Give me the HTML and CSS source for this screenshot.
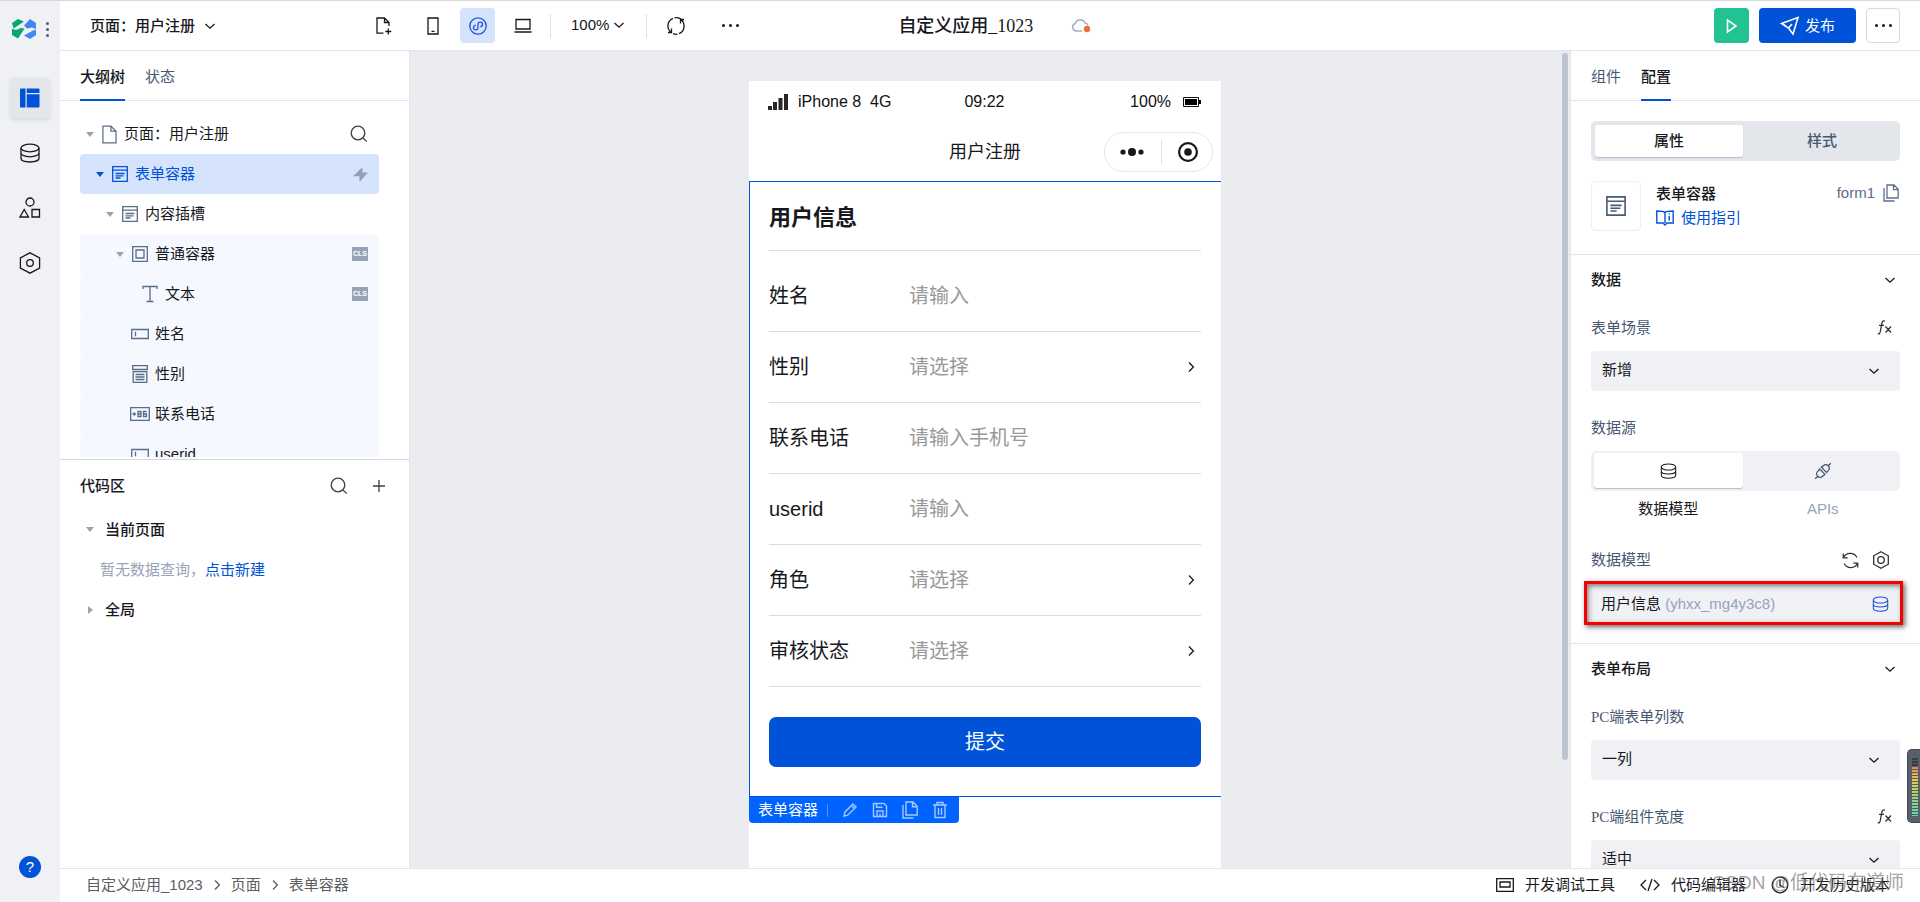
FILE: index.html
```html
<!DOCTYPE html>
<html lang="zh-CN">
<head>
<meta charset="utf-8">
<title>自定义应用_1023</title>
<link rel="stylesheet" href="styles.css">
</head>
<body>
<svg class="sprite" aria-hidden="true">
  <symbol id="chev-down" viewBox="0 0 12 12"><path d="M1.5 4 6 8.2 10.5 4"/></symbol>
  <symbol id="chev-right" viewBox="0 0 12 12"><path d="M4 1.5 8.4 6 4 10.5"/></symbol>
  <symbol id="search" viewBox="0 0 18 18"><circle cx="8" cy="8" r="6.8"/><path d="m13 13 3.8 3.6"/></symbol>
  <symbol id="db" viewBox="0 0 20 20"><ellipse cx="10" cy="5" rx="9" ry="3.8"/><path d="M1 5v10.300C1 17.500 5 19 10 19s9-1.500 9-3.700V5M1 10c0 2.200 4 3.800 9 3.800s9-1.600 9-3.800"/></symbol>
  <symbol id="hex" viewBox="0 0 22 22"><path d="M11 .8 20.6 5.8v10.4L11 21.2 1.4 16.2V5.8z"/><circle cx="11" cy="11" r="3.3"/></symbol>
  <symbol id="hex-ring" viewBox="0 0 18 18"><path d="M9 .8 16.3 4.8v8.4L9 17.2 1.700 13.200V4.800z"/><circle cx="9" cy="9" r="3.300"/></symbol>
  <symbol id="form" viewBox="0 0 16 16"><path d="M.7.7h14.600v14.600H.7zM.7 4.200h14.600M3.500 7.500h9M3.500 9.800h8M3.500 12h5"/></symbol>
  <symbol id="box" viewBox="0 0 16 16"><path d="M.7.7h14.600v14.600H.7zM4 4h8v8H4z"/></symbol>
  <symbol id="text" viewBox="0 0 16 18"><path d="M1 4V1.500h14V4M8 1.500v15M4.500 16.500h7"/></symbol>
  <symbol id="input" viewBox="0 0 18 12"><path d="M.7 1.500h16.600v9H.7zM4.500 3.800v4.500"/></symbol>
  <symbol id="select" viewBox="0 0 16 18"><path d="M.7.7h14.600v3.600H.7zM1.200 6.500h13.600v10.800H1.200zM3.500 9.500h9M3.500 12h9M3.500 14.500h9"/></symbol>
  <symbol id="phone-code" viewBox="0 0 20 14"><path d="M.7.7h18.600v12.600H.7zM2.500 7h3.600M4.300 5.200v3.600M8 4.500h3v5H8zM8 7h3M16.500 4.500h-3v5h3V7h-3"/></symbol>
  <symbol id="page" viewBox="0 0 16 20"><path d="M1 1h8.500L15 6.500V19H1zM9.500 1v5.500H15"/></symbol>
  <symbol id="copy" viewBox="0 0 16 18"><path d="M4 1h7l4.200 4.200V14H4zM10.500 1v4.700h4.700M1 4v13h10.500"/></symbol>
  <symbol id="refresh" viewBox="0 0 18 18"><path d="M1.500 6A8 8 0 0 1 15.800 5.800M16.500 12A8 8 0 0 1 2.200 12.200M1.300 1.500V6.300H6M16.700 16.500v-4.800H12"/></symbol>
  <symbol id="fx" viewBox="0 0 16 18"><path d="M8 2.200C5.800 1 5 3 4.600 5.500L3.300 12.500C2.900 14.800 2 15.300.8 14.700M2 6.300h5M8.500 7.500l5.500 6M14 7.500l-5.500 6"/></symbol>
</svg>

<div class="app">
  <aside class="rail">
    <div class="brand">
      <svg class="logo" viewBox="0 0 24 20" aria-label="logo"><path fill="#07a86c" d="M0 4 6 0l6 2.500L1.500 9.500zM0 9.800 4 11l5-2 3.500.5L6 19.500 0 16z"/><path fill="#4285f4" d="m18 0 6 4v6l-4-1.500-5 1-3-3zM23 10.500l1 1V16l-6 4-6-3.500z"/></svg>
      <button class="dots-v" aria-label="菜单"><i></i><i></i><i></i></button>
    </div>
    <nav class="rail-nav">
      <button class="rail-btn on" aria-label="页面设计"><svg width="20" height="20" viewBox="0 0 20 20"><path fill="#0052d9" d="M1 .5h4.500v19H1a1 1 0 0 1-1-1v-17a1 1 0 0 1 1-1zM6.700.5H18.500a1 1 0 0 1 1 1V5H6.700zM6.700 6.300h12.800v12.200a1 1 0 0 1-1 1H6.700z"/></svg></button>
      <button class="rail-btn" aria-label="数据"><svg class="ic" width="20" height="20"><use href="#db"/></svg></button>
      <button class="rail-btn" aria-label="组件"><svg class="ic" width="22" height="22" viewBox="0 0 22 22"><circle cx="11" cy="5" r="4"/><path d="M5.200 12.500 9.500 20H1zM13 12.500h7.500V20H13z"/></svg></button>
      <button class="rail-btn" aria-label="设置"><svg class="ic" width="22" height="22"><use href="#hex"/></svg></button>
    </nav>
    <button class="help" aria-label="帮助">?</button>
  </aside>

  <div class="main">
    <header class="topbar">
      <div class="top-left">
        <button class="page-name">页面：用户注册 <svg class="ic chev"><use href="#chev-down"/></svg></button>
      </div>
      <div class="tools">
        <button class="tool" aria-label="新建页面"><svg class="ic" width="16" height="18" viewBox="0 0 16 18"><path d="M7.500 16.200H1V1h7.500L13 5.500V9M8.500 1v4.500H13M12.300 11.500v6M9.300 14.500h6"/></svg></button>
        <button class="tool" aria-label="手机"><svg class="ic" width="12" height="18" viewBox="0 0 12 18"><path d="M1 1h10v16H1zM4.500 14.300h3"/></svg></button>
        <button class="tool on" aria-label="小程序"><svg class="ic" width="18" height="18" viewBox="0 0 18 18"><circle cx="9" cy="9" r="8.200"/><path d="M6.800 8.300A2.300 2.300 0 1 0 9 11.300V6.700a2.300 2.300 0 1 1 2.200 3"/></svg></button>
        <button class="tool" aria-label="电脑"><svg class="ic" width="18" height="16" viewBox="0 0 18 16"><path d="M2 1.500h14v9.500H2zM.5 14h17"/></svg></button>
        <span class="sep"></span>
        <button class="zoom">100% <svg class="ic chev"><use href="#chev-down"/></svg></button>
        <span class="sep"></span>
        <button class="tool" aria-label="刷新"><svg class="ic" width="20" height="20" viewBox="0 0 20 20"><path d="M7 2.300A8.200 8.200 0 0 0 5.300 16.500M5.500 12.500v4H2M8.500 1.800A8.200 8.200 0 0 1 17 5.500M13 17.700A8.200 8.200 0 0 0 14.700 3.500M14.500 7.500v-4H18M11.500 18.200A8.200 8.200 0 0 1 7 17.600"/></svg></button>
        <button class="tool more" aria-label="更多"><i></i><i></i><i></i></button>
      </div>
      <div class="app-title"><h1>自定义应用_1023</h1>
        <svg class="cloud" width="20" height="16" viewBox="0 0 20 16"><path d="M11 13H5a4 4 0 0 1-.5-7.800A5 5 0 0 1 14 5a3.500 3.500 0 0 1 3 2.500"/><circle cx="16" cy="11" r="3.200"/></svg>
      </div>
      <div class="top-actions">
        <button class="play" aria-label="预览"><svg width="12" height="16" viewBox="0 0 12 16"><path d="M1.500 2v12L10 8z"/></svg></button>
        <button class="publish"><svg width="20" height="20" viewBox="0 0 20 20"><path d="M1.500 7.500 18 1.500 13 18 8.500 12zM8.500 12l3.500-4M1.500 7.500 6 10"/></svg>发布</button>
        <button class="more outlined" aria-label="更多操作"><i></i><i></i><i></i></button>
      </div>
    </header>

    <div class="workspace">
      <section class="left">
        <div class="outline">
          <div class="tabs"><button class="tab on">大纲树</button><button class="tab">状态</button></div>
          <ul class="tree">
            <li class="node d0"><span class="caret"></span><svg class="ic" width="15" height="19"><use href="#page"/></svg><span class="name">页面：用户注册</span><button class="plain" aria-label="搜索"><svg class="ic dark" width="18" height="18"><use href="#search"/></svg></button></li>
            <li class="node d1 on"><span class="caret"></span><svg class="ic" width="16" height="16"><use href="#form"/></svg><span class="name">表单容器</span><svg class="bolt" width="15" height="15" viewBox="0 0 15 15"><path d="M9.500 0v5.500H15L6.500 15V9.300H0z"/></svg></li>
            <li class="node d2"><span class="caret"></span><svg class="ic" width="16" height="16"><use href="#form"/></svg><span class="name">内容插槽</span></li>
            <li class="node d3 sub"><span class="caret"></span><svg class="ic" width="16" height="16"><use href="#box"/></svg><span class="name">普通容器</span><span class="cls">CLS</span></li>
            <li class="node d4 sub"><svg class="ic" width="16" height="18"><use href="#text"/></svg><span class="name">文本</span><span class="cls">CLS</span></li>
            <li class="node d3 sub leaf"><svg class="ic" width="18" height="12"><use href="#input"/></svg><span class="name">姓名</span></li>
            <li class="node d3 sub leaf"><svg class="ic" width="18" height="18"><use href="#select"/></svg><span class="name">性别</span></li>
            <li class="node d3 sub leaf wide"><svg class="ic" width="20" height="14"><use href="#phone-code"/></svg><span class="name">联系电话</span></li>
            <li class="node d3 sub leaf"><svg class="ic" width="18" height="12"><use href="#input"/></svg><span class="name">userid</span></li>
          </ul>
        </div>
        <div class="code">
          <div class="code-head"><h2>代码区</h2>
            <button class="plain" aria-label="搜索代码"><svg class="ic dark" width="18" height="18"><use href="#search"/></svg></button>
            <button class="plain" aria-label="新建"><svg class="ic dark" width="12" height="12" viewBox="0 0 12 12"><path d="M6 0v12M0 6h12"/></svg></button>
          </div>
          <div class="group"><span class="caret"></span>当前页面</div>
          <p class="empty">暂无数据查询，<a href="#new">点击新建</a></p>
          <div class="group closed"><span class="caret"></span>全局</div>
        </div>
      </section>

      <main class="canvas">
        <div class="phone">
          <div class="status">
            <span class="carrier"><svg width="20" height="16" viewBox="0 0 20 16"><path fill="#262626" d="M0 12h4v4H0zM5 8h4v8H5zM10.500 4h4v12h-4zM16 0h4v16h-4z"/></svg>iPhone 8 &nbsp;4G</span>
            <span class="clock">09:22</span>
            <span class="battery">100%<svg width="18" height="10" viewBox="0 0 18 10"><path fill="none" stroke="#111" d="M.5.5h15v9H.5z"/><path d="M2 2h12v6H2zM16 3h2v4h-2z"/></svg></span>
          </div>
          <div class="navbar">用户注册
            <div class="capsule">
              <svg width="24" height="10" viewBox="0 0 24 10"><circle cx="3" cy="5" r="2.600"/><circle cx="12" cy="5" r="4"/><circle cx="21" cy="5" r="2.600"/></svg>
              <span class="bar"></span>
              <svg width="20" height="20" viewBox="0 0 20 20"><circle cx="10" cy="10" r="8.900" fill="none" stroke="#181818" stroke-width="2.200"/><circle cx="10" cy="10" r="3.800"/></svg>
            </div>
          </div>
          <form class="form">
            <h2 class="form-title">用户信息</h2>
            <div class="field first"><label for="name">姓名</label><input id="name" type="text" placeholder="请输入"></div>
            <div class="field"><label for="sex">性别</label><select id="sex"><option>请选择</option></select><svg class="ic chev"><use href="#chev-right"/></svg></div>
            <div class="field"><label for="tel">联系电话</label><input id="tel" type="tel" placeholder="请输入手机号"></div>
            <div class="field"><label for="uid">userid</label><input id="uid" type="text" placeholder="请输入"></div>
            <div class="field"><label for="role">角色</label><select id="role"><option>请选择</option></select><svg class="ic chev"><use href="#chev-right"/></svg></div>
            <div class="field"><label for="state">审核状态</label><select id="state"><option>请选择</option></select><svg class="ic chev"><use href="#chev-right"/></svg></div>
            <button class="submit" type="button">提交</button>
          </form>
          <div class="sel-bar"><span>表单容器</span><span class="bar"></span>
            <button class="plain" aria-label="编辑"><svg width="16" height="16" viewBox="0 0 16 16"><path d="M2 14l.8-3.800L11 2l3 3-8.300 8.200zM9.500 3.500l3 3"/></svg></button>
            <button class="plain" aria-label="保存"><svg width="16" height="16" viewBox="0 0 16 16"><path d="M1.500 1.500h10.500l2.500 2.500v10.500h-13zM4.500 1.500v3.800h6M5 14.500V9h6v5.500M8 11.500v3"/></svg></button>
            <button class="plain" aria-label="复制"><svg width="16" height="18"><use href="#copy"/></svg></button>
            <button class="plain" aria-label="删除"><svg width="16" height="18" viewBox="0 0 16 18"><path d="M1 4h14M5 4V1.500h6V4M3 4v12.500h10V4M6.500 7v7M9.500 7v7"/></svg></button>
          </div>
        </div>
        <span class="scrollbar"></span>
      </main>

      <aside class="right">
        <div class="tabs"><button class="tab">组件</button><button class="tab on">配置</button></div>
        <div class="block intro">
          <div class="seg"><button class="on">属性</button><button>样式</button></div>
          <div class="card">
            <span class="card-ic"><svg class="ic" width="20" height="20"><use href="#form"/></svg></span>
            <div class="card-text"><strong>表单容器</strong><a href="#guide"><svg width="18" height="16" viewBox="0 0 18 16"><path d="M9 2.500C8 1.200 6 1 .8 1v12H7l2 2 2-2h6.200V1C12 1 10 1.200 9 2.500zV13M13.200 6v4.500M13.200 3.200v1.300"/></svg>使用指引</a></div>
            <div class="card-id">form1<button class="plain" aria-label="复制标识"><svg class="ic" width="16" height="18"><use href="#copy"/></svg></button></div>
          </div>
        </div>
        <div class="block">
          <h3 class="sec">数据<svg class="ic chev"><use href="#chev-down"/></svg></h3>
          <div class="row"><label for="scene">表单场景</label><button class="plain" aria-label="表达式"><svg class="ic" width="16" height="18"><use href="#fx"/></svg></button></div>
          <div class="pick"><select id="scene"><option>新增</option></select><svg class="ic chev"><use href="#chev-down"/></svg></div>
          <div class="row gap"><span>数据源</span></div>
          <div class="seg light"><button class="on" aria-label="数据模型"><svg class="ic" width="17" height="16"><use href="#db"/></svg></button><button aria-label="APIs"><svg class="ic" width="18" height="18" viewBox="0 0 18 18"><g transform="rotate(-45 9 9)"><path d="M-2 9h3.500M16.500 9H20M8 4.500v9M8 5.500H5a3.500 3.500 0 0 0 0 7h3M10.500 4.500v9M10.500 5.500H13a3.500 3.500 0 0 1 0 7h-2.500"/></g></svg></button></div>
          <div class="captions"><span>数据模型</span><span class="muted">APIs</span></div>
          <div class="row"><span>数据模型</span><span class="row-ic"><button class="plain" aria-label="刷新模型"><svg class="ic" width="17" height="17"><use href="#refresh"/></svg></button><button class="plain" aria-label="模型设置"><svg class="ic" width="18" height="18"><use href="#hex-ring"/></svg></button></span></div>
          <div class="model"><span>用户信息 <span class="muted">(yhxx_mg4y3c8)</span></span><svg class="ic" width="17" height="16"><use href="#db"/></svg></div>
        </div>
        <div class="block last">
          <h3 class="sec">表单布局<svg class="ic chev"><use href="#chev-down"/></svg></h3>
          <div class="row"><label for="cols">PC端表单列数</label></div>
          <div class="pick"><select id="cols"><option>一列</option></select><svg class="ic chev"><use href="#chev-down"/></svg></div>
          <div class="row gap"><label for="width">PC端组件宽度</label><button class="plain" aria-label="表达式"><svg class="ic" width="16" height="18"><use href="#fx"/></svg></button></div>
          <div class="pick"><select id="width"><option>适中</option></select><svg class="ic chev"><use href="#chev-down"/></svg></div>
        </div>
      </aside>
    </div>

    <footer class="foot">
      <nav class="crumbs"><a href="#app">自定义应用_1023</a><svg class="ic chev"><use href="#chev-right"/></svg><a href="#pages">页面</a><svg class="ic chev"><use href="#chev-right"/></svg><a href="#form">表单容器</a></nav>
      <div class="foot-tools">
        <button><svg class="ic" width="18" height="14" viewBox="0 0 18 14"><path d="M.7.7h16.600v12.600H.7zM4 4h10v5H4z"/></svg>开发调试工具</button>
        <button><svg class="ic" width="20" height="14" viewBox="0 0 20 14"><path d="M6 2 1 7l5 5M14 2l5 5-5 5M12 1 8 13"/></svg>代码编辑器</button>
        <button><svg class="ic" width="18" height="18" viewBox="0 0 18 18"><circle cx="9" cy="9" r="7.800"/><path d="M9 4v5.500l4 2"/></svg>开发历史版本</button>
      </div>
    </footer>
  </div>
  <span class="meter"></span>
  <span class="watermark">CSDN @低代码布道师</span>
</div>
</body>
</html>
```
FILE: styles.css
```css
* { box-sizing: border-box; }
body {
  margin: 0;
  font: 15px/20px "Liberation Sans", "Noto Sans CJK SC", sans-serif;
  color: #16181d;
}
button { font: inherit; color: inherit; background: none; border: 0; padding: 0; margin: 0; }
a { color: inherit; text-decoration: none; }
h1, h2, h3, p, ul { margin: 0; padding: 0; font-size: 15px; }
h1, h2, h3, strong { font-weight: 500; }
svg { flex: none; }
.sprite { position: absolute; width: 0; height: 0; }
.ic { fill: none; stroke: currentColor; stroke-width: 1.3; }
.chev { width: 12px; height: 12px; }
.plain { display: flex; align-items: center; justify-content: center; }

.app { display: flex; height: 100vh; position: relative; overflow: hidden; border-top: 1px solid #d9d9dc; }
.main { flex: 1; min-width: 0; display: flex; flex-direction: column; }

.rail { width: 60px; background: #f0f1f5; display: flex; flex-direction: column; align-items: center; padding: 18px 0 24px; }
.brand { display: flex; align-items: center; gap: 10px; height: 20px; }
.logo { width: 24px; height: 20px; }
.dots-v { display: flex; flex-direction: column; gap: 3px; }
.dots-v i { width: 3px; height: 3px; border-radius: 50%; background: #4b5b76; }
.rail-nav { flex: 1; display: flex; flex-direction: column; gap: 15px; padding-top: 39px; }
.rail-btn { width: 40px; height: 40px; border-radius: 4px; display: flex; align-items: center; justify-content: center; }
.rail-btn.on { background: #e3e6eb; box-shadow: 0 2px 4px #0000001a; }
.help { width: 22px; height: 22px; border-radius: 50%; background: #0052d9; color: #fff; line-height: 22px; }

.topbar { height: 50px; flex: none; display: flex; align-items: center; border-bottom: 1px solid #e2e5eb; padding: 0 20px 0 30px; }
.top-left { width: 276px; }
.page-name, .zoom { display: flex; align-items: center; gap: 9px; font-weight: 500; }
.zoom { font-weight: 400; gap: 4px; margin: 0 21px 2px 20px; }
.tools { display: flex; align-items: center; }
.tool { width: 35px; height: 35px; margin-right: 10px; border-radius: 4px; display: flex; align-items: center; justify-content: center; }
.tool:first-child { margin-right: 14px; }
.tool.on { background: #d5e4fc; color: #1f50d8; }
.sep { width: 1px; height: 24px; background: #dcdfe6; }
.tools .sep + .tool { margin: 0 20px 0 11px; }
.more { gap: 4px; display: flex; align-items: center; justify-content: center; }
.more i { width: 3px; height: 3px; border-radius: 50%; background: #16181d; }
.app-title { flex: 1; display: flex; align-items: center; gap: 38px; padding-left: 140px; }
.app-title h1 { font: 500 18px/24px "Liberation Serif", "Noto Sans CJK SC", serif; }
.cloud path { fill: none; stroke: #a3afc4; stroke-width: 1.5; }
.cloud circle { fill: #ed7132; }
.top-actions { display: flex; gap: 10px; }
.play, .publish, .outlined { height: 35px; border-radius: 4px; display: flex; align-items: center; justify-content: center; }
.play { width: 35px; background: #20c391; }
.play path, .publish path { fill: none; stroke: #fff; stroke-width: 1.6; }
.publish { width: 97px; background: #0052d9; color: #fff; gap: 5px; }
.outlined { width: 34px; border: 1px solid #d5d9e1; }

.workspace { flex: 1; min-height: 0; display: flex; }
.left { width: 350px; border-right: 1px solid #e2e5eb; display: grid; grid-template-rows: minmax(0, 1fr) minmax(0, 1fr); }
.tabs { height: 50px; flex: none; padding: 0 20px; display: flex; gap: 20px; border-bottom: 1px solid #e2e5eb; }
.tab { height: 50px; padding: 4px 0 0; border-bottom: 2px solid transparent; color: #485874; }
.tab.on { color: #16181d; font-weight: 500; border-color: #0052d9; }
.outline { display: flex; flex-direction: column; min-height: 0; border-bottom: 1px solid #d5d9e3; }
.tree { list-style: none; flex: 1; min-height: 0; overflow: hidden; padding: 13px 30px 0 20px; margin-bottom: 2px; }
.node { height: 40px; display: flex; align-items: center; gap: 7px; padding-right: 11px; border-radius: 4px; color: #5b6c8a; }
.node .name { flex: 1; color: #16181d; }
.node .dark, .code .dark { color: #3c3f45; }
.node.on { background: #d5e4fc; color: #0052d9; }
.node.on .name { color: #0052d9; }
.node.sub { background: #f5f8ff; }
.caret { border: 4px solid transparent; border-top: 5px solid #97a3b7; border-bottom: 0; width: 8px; margin-right: 1px; }
.node.on .caret { border-top-color: #0052d9; }
.d0 { padding-left: 6px; }
.d1 { padding-left: 16px; }
.d2 { padding-left: 26px; }
.d3 { padding-left: 36px; }
.d4 { padding-left: 62px; }
.leaf { padding-left: 51px; gap: 6px; }
.leaf.wide { padding-left: 50px; gap: 5px; }
.bolt { fill: #8fa0ba; }
.cls { width: 16px; height: 14px; background: #97a3b7; color: #fff; border-radius: 1px; font: bold 7px/14px "Liberation Sans", sans-serif; text-align: center; }

.code-head { display: flex; align-items: center; gap: 25px; padding: 16px 24px 14px 20px; }
.code-head h2 { flex: 1; }
.group { display: flex; align-items: center; gap: 10px; height: 40px; padding-left: 26px; font-weight: 500; }
.group.closed .caret { border: 4px solid transparent; border-left: 5px solid #97a3b7; border-right: 0; width: 5px; margin: 0 2px 0 2px; }
.empty { height: 40px; line-height: 40px; padding-left: 40px; color: #97a3b7; }
.empty a { color: #0052d9; }

.canvas { flex: 1; min-width: 0; background: #ebecf0; position: relative; display: flex; justify-content: center; padding: 30px 10px 0 0; overflow: hidden; }
.scrollbar { position: absolute; right: 2px; top: 2px; bottom: 108px; width: 6px; border-radius: 3px; background: #bbc4d0; }
.phone { width: 472px; flex: none; background: #fff; }
.status { height: 42px; padding: 0 20px 0 19px; display: grid; grid-template-columns: 1fr auto 1fr; align-items: center; color: #111; font-size: 16px; }
.carrier, .battery { display: flex; align-items: center; gap: 10px; }
.battery { justify-content: flex-end; gap: 12px; }
.navbar { height: 58px; position: relative; display: flex; align-items: center; justify-content: center; font-size: 18px; }
.capsule { position: absolute; right: 8px; width: 109px; height: 40px; border: 1px solid #e6e6ea; border-radius: 20px; display: flex; align-items: center; justify-content: space-between; padding: 0 14px 0 15px; fill: #181818; }
.bar { width: 1px; height: 24px; background: #e2e2e6; }
.form { border: 1px solid #0052d9; border-right: 0; padding: 0 20px 29px 19px; }
.form-title { font-size: 22px; line-height: 72px; font-weight: 700; height: 69px; border-bottom: 1px solid #dcdcdc; }
.field { display: flex; align-items: center; height: 71px; border-bottom: 1px solid #dcdcdc; font-size: 20px; }
.field.first { height: 81px; padding-top: 10px; }
.field label { width: 140px; }
.field input, .field select { flex: 1; min-width: 0; border: 0; padding: 0; margin: 0; font: inherit; color: #999; background: none; appearance: none; outline: 0; height: 40px; }
.field input::placeholder { color: #999; opacity: 1; }
.field .chev { margin-right: 4px; }
.submit { display: block; width: 100%; height: 50px; margin-top: 30px; border-radius: 7px; background: #0052d9; color: #fff; font-size: 20px; }
.sel-bar { width: 210px; height: 26px; background: #0063ff; color: #fff; border-radius: 0 0 4px 4px; display: flex; align-items: center; gap: 14px; padding-left: 9px; }
.sel-bar .bar { height: 13px; background: #4d92ff; margin-left: -5px; }
.sel-bar svg { fill: none; stroke: #a6c8ff; stroke-width: 1.4; }

.right { width: 350px; border-left: 1px solid #e2e5eb; overflow: hidden; }
.block { padding: 0 20px 19px; border-bottom: 1px solid #e2e5eb; }
.block.last { border: 0; }
.intro { padding: 20px 20px 23px; }
.seg { display: flex; gap: 5px; height: 40px; padding: 4px; border-radius: 5px; background: #e3e6eb; }
.seg button { flex: 1; border-radius: 3px; display: flex; align-items: center; justify-content: center; color: #485874; font-weight: 500; }
.seg .on { background: #fff; color: #16181d; box-shadow: 0 1px 1px #b5bdca; }
.seg.light { background: #f0f1f5; padding: 2px 3px 3px; }
.card { display: flex; gap: 15px; margin-top: 20px; }
.card-ic { width: 50px; height: 50px; border: 1px solid #eeeff3; border-radius: 4px; display: flex; align-items: center; justify-content: center; color: #4b5b76; }
.card-text { flex: 1; display: flex; flex-direction: column; gap: 4px; padding-top: 3px; }
.card-text a { display: flex; align-items: center; gap: 7px; color: #0052d9; }
.card-text svg { fill: none; stroke: #0052d9; stroke-width: 1.4; }
.card-id { display: flex; gap: 8px; height: 20px; margin-top: 2px; padding-right: 1px; color: #5b6c8a; }
.sec { display: flex; align-items: center; justify-content: space-between; height: 50px; padding-right: 4px; }
.row { display: flex; align-items: center; justify-content: space-between; height: 46px; padding-right: 7px; color: #485874; font-family: "Liberation Serif", "Noto Sans CJK SC", serif; }
.row.gap { margin-top: 14px; }
.row .ic { color: #2d3036; }
.row-ic { display: flex; gap: 13px; padding-right: 3px; }
.pick { position: relative; display: flex; align-items: center; height: 40px; background: #f0f1f5; border-radius: 4px; padding: 0 20px 0 11px; }
.pick select { flex: 1; border: 0; padding: 0; font: inherit; color: inherit; background: none; appearance: none; outline: 0; height: 38px; margin-bottom: 2px; }
.captions { display: grid; grid-template-columns: 1fr 1fr; text-align: center; line-height: 36px; margin-bottom: 10px; }
.muted { color: #97a3b7; }
.model { position: relative; height: 41px; background: #f0f1f5; display: flex; align-items: center; justify-content: space-between; padding: 0 11px 0 10px; }
.model .ic { color: #1f50d8; }
.model::after { content: ""; position: absolute; inset: -2px -3px -1px -7px; border: 3px solid #f90000; box-shadow: 2px 2px 5px #00000099, inset 2px 2px 5px #00000080; }

.foot { height: 34px; flex: none; border-top: 1px solid #e2e5eb; display: flex; align-items: center; justify-content: space-between; padding: 0 30px 2px 26px; }
.crumbs, .foot-tools, .foot-tools button { display: flex; align-items: center; }
.crumbs { gap: 8px; color: #5a5d63; }
.foot-tools { gap: 25px; }
.foot-tools button { gap: 11px; }
.meter {
  position: absolute; right: 0; bottom: 79px; width: 13px; height: 74px; border-radius: 5px 0 0 5px; border: 1px solid #43464f; border-right: 0;
  background:
    repeating-linear-gradient(#0000 0 2px, #555a68 2px 3px) 4px 8px / 6px 58px no-repeat,
    linear-gradient(#3a3d46 0 8px, #ee7b62 8px, #e3cf4c 22px, #b9d65a 32px, #5cd6b0 58px) 4px 8px / 6px 58px no-repeat,
    #5a5f6e;
}
.watermark { position: absolute; right: 16px; bottom: 6px; font-size: 19px; line-height: 26px; color: #6e6e6ea6; pointer-events: none; }
```
